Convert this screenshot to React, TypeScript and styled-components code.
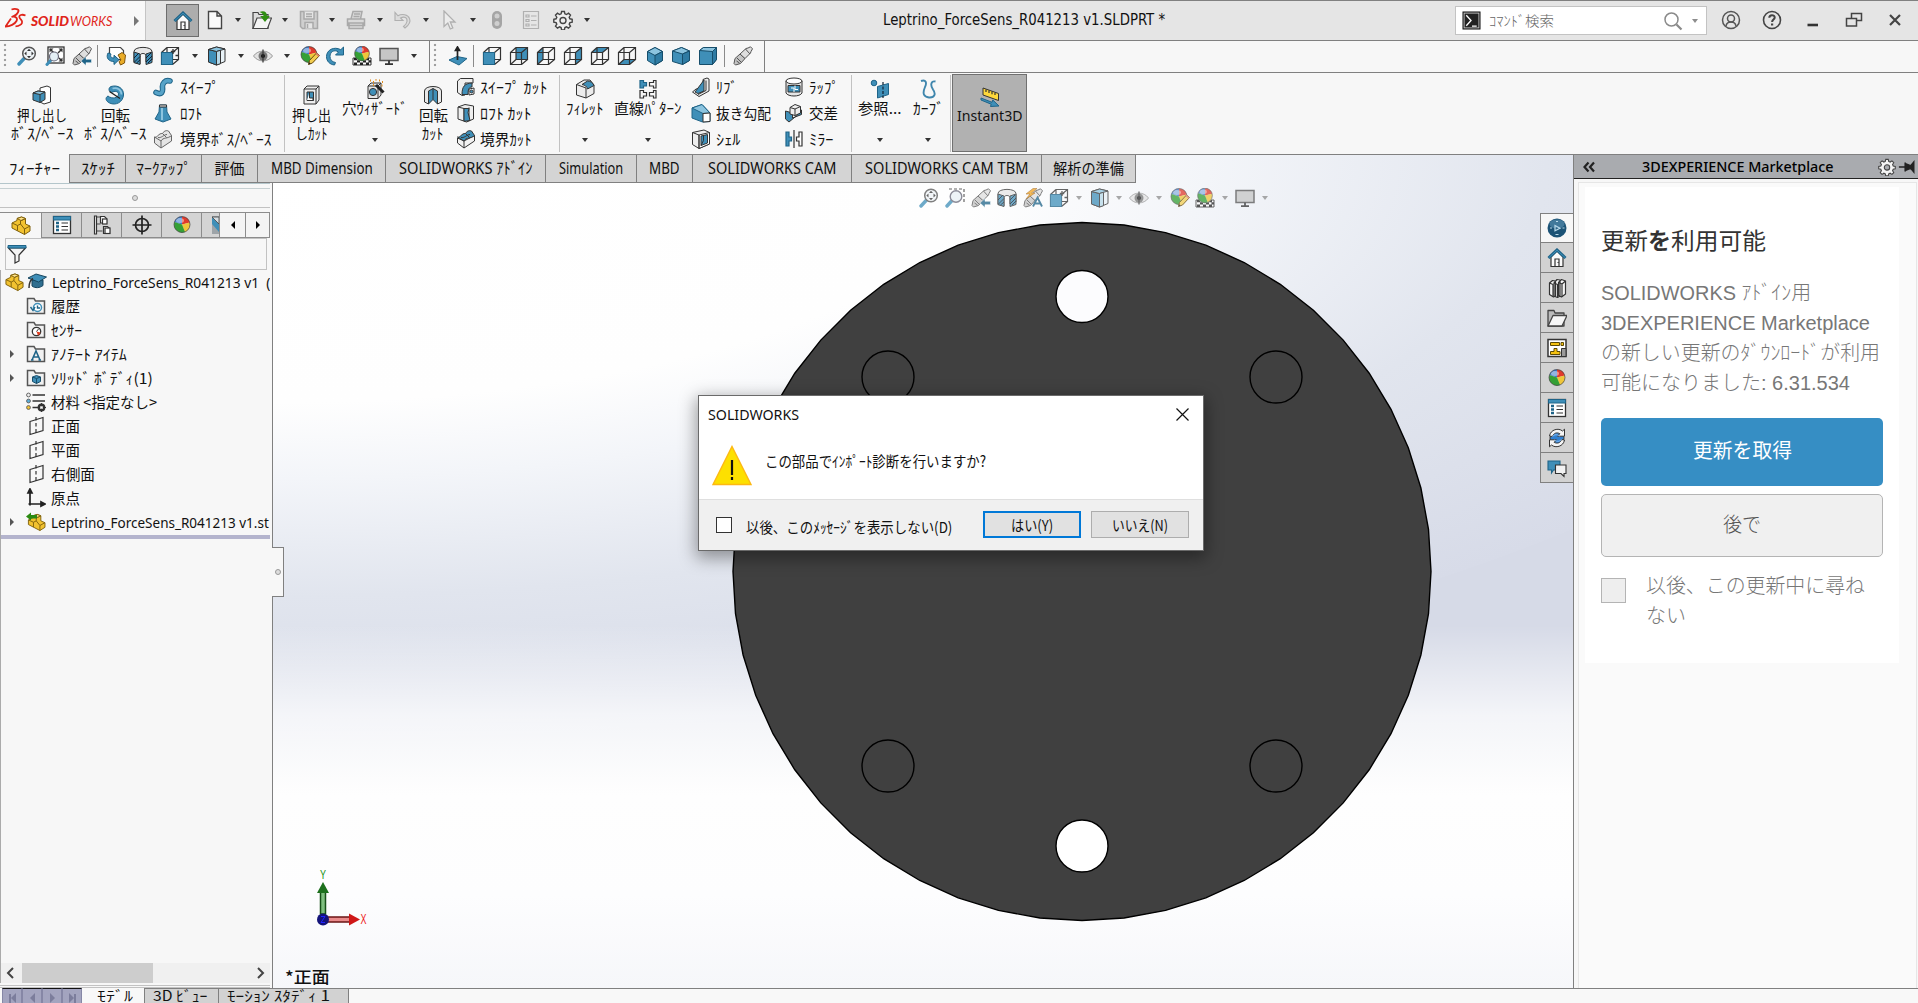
import React, { ReactNode, useLayoutEffect, useRef, useState } from "react";
import styled, { createGlobalStyle, css } from "styled-components";

const UI = `"Noto Sans", "Noto Sans CJK JP", sans-serif`;
const TAHOMA = `"DejaVu Sans Condensed", "DejaVu Sans", "Noto Sans CJK JP", sans-serif`;
const KANA = `"Noto Sans CJK JP", sans-serif`;
const ARIAL = `"Liberation Sans", "Noto Sans CJK JP Light", "Noto Sans CJK JP", sans-serif`;
const THIN = `"Noto Sans CJK JP Light", "Noto Sans CJK JP", sans-serif`;

const Global = createGlobalStyle`
  * { box-sizing: border-box; }
  html, body { margin: 0; padding: 0; overflow: hidden; }
  body { font-family: ${UI}; color: #111; background: #f7f7f7; }
  svg { display: block; flex: none; }
`;

/* ---------- Condensed label: squeezes its text into the width of its slot ---------- */

const LabelBox = styled.span<{ $w: number; $size: number; $color: string; $font: string; $lh: number; $weight: number; $dy: number }>`
  display: block;
  flex: none;
  width: ${(p) => p.$w}px;
  height: ${(p) => p.$lh}px;
  margin-top: ${(p) => p.$dy}px;
  line-height: ${(p) => p.$lh}px;
  font-family: ${(p) => p.$font};
  font-size: ${(p) => p.$size}px;
  font-weight: ${(p) => p.$weight};
  color: ${(p) => p.$color};
  white-space: pre;
`;
const LabelInk = styled.span`
  display: inline-block;
  transform-origin: 0 50%;
  vertical-align: top;
`;

type LabelProps = { w: number; size?: number; color?: string; font?: string; lh?: number; weight?: number; dy?: number; children: ReactNode };
function Label({ w, size = 15, color = "#111", font = KANA, lh = 18, weight = 400, dy = 0, children }: LabelProps) {
  const ref = useRef<HTMLSpanElement>(null);
  const [scale, setScale] = useState(1);
  useLayoutEffect(() => {
    if (ref.current) setScale(w / ref.current.offsetWidth);
  }, [w]);
  return (
    <LabelBox $w={w} $size={size} $color={color} $font={font} $lh={lh} $weight={weight} $dy={dy}>
      <LabelInk ref={ref} style={{ transform: `scaleX(${scale})` }}>{children}</LabelInk>
    </LabelBox>
  );
}

/* ---------- Icons ---------- */

const K = "#333";
const B = "#3f8fb8";
const BD = "#1f6488";
const BL = "#8cc4df";

const wire = (
  <path d="M1.5 6.5h11v12h-11zM7 1.5h11.500v12h-11.500zM1.500 6.500L7 1.500M12.500 6.500l6-5M12.500 18.500l6-5M1.500 18.500l5.500-5" fill="none" stroke={K} strokeWidth="1.200" />
);
const ball = (
  <g>
    <circle cx="10" cy="9.500" r="8" fill="#dcdcdc" />
    <path d="M10 9.500L2.500 7A8 8 0 0 1 10 1.500z" fill="#3b78c8" />
    <path d="M10 9.500V1.500a8 8 0 0 1 7.800 6z" fill="#e03a2c" />
    <path d="M10 9.500l7.800-2a8 8 0 0 1-5 9.500z" fill="#efc63a" />
    <path d="M10 9.500l3 7.500A8 8 0 0 1 2.500 7z" fill="#35a035" />
    <ellipse cx="8" cy="5.500" rx="4" ry="2.500" fill="#fff" opacity=".45" />
    <circle cx="10" cy="9.500" r="8" fill="none" stroke="#444" strokeWidth=".7" />
  </g>
);
const folder = <path d="M1.500 17.500V2.500h6.500l1.500 2.500H18.500v12.500z" fill="#f1f1f1" stroke="#555" strokeWidth="1.500" />;
const lens = (
  <g>
    <path d="M2 18l6-6.500" stroke={B} strokeWidth="3.400" strokeLinecap="round" />
    <circle cx="12" cy="7.500" r="6.300" fill="#eef3f6" stroke="#555" strokeWidth="1.500" />
  </g>
);
const spray = (
  <g stroke="#555" strokeWidth="1" strokeLinejoin="round">
    <path d="M2 12.500l5-4.500 5 4.500-4.500 5-5 1.500-1.500-1.500z" fill="#c4c4c4" />
    <path d="M7 8l6-5.500 2-.5L17.500.8l2 2-1.500 2.700-.5 1.500L12 12.500z" fill="#dedede" />
    <path d="M4 12l4 4M12.500 3l4.500 5M3.500 15l3 2" fill="none" />
  </g>
);
const partBlock = (
  <g stroke="#80610c" strokeWidth="1" strokeLinejoin="round">
    <path d="M1 7l5-2.500V2.500L10.500 1l4 1.500v5.500l4.500 2V15l-5.500 3.500L1 12z" fill="#f2c230" />
    <path d="M1 7l5.500 2.500L9.500 8V5l5-2.500M9.500 8l4 5 5.500-3M6.500 9.500v5.200M13.500 13v5.500" fill="none" />
    <path d="M6 2.500l4 2 4.500-2-4-1.500z" fill="#ffe38a" />
  </g>
);
const planeShape = <path d="M4 5.500l13-4v13l-13 4z" fill="none" stroke={K} strokeWidth="1.200" />;
const listDoc = (
  <g>
    <rect x="1.500" y="1.500" width="17" height="17" fill="#fff" stroke={K} strokeWidth="1.300" />
    <rect x="1.500" y="1.500" width="17" height="3.500" fill={B} stroke={BD} />
    <path d="M4 8h3M4 11.500h3M4 15h3" stroke={BD} strokeWidth="2.400" />
    <path d="M9.500 8H16M9.500 11.500H16M9.500 15H16" stroke={K} strokeWidth="1.200" />
  </g>
);
const gearPath = "M8.600 1.500h2.800l.5 2.300 1.600.7 2-1.300 2 2-1.300 2 .7 1.600 2.300.5v2.800l-2.300.5-.7 1.600 1.300 2-2 2-2-1.300-1.600.7-.5 2.300H8.600l-.5-2.300-1.600-.7-2 1.300-2-2 1.300-2-.7-1.600-2.300-.5V9.300l2.300-.5.7-1.600-1.300-2 2-2 2 1.300 1.600-.7z";

const icons: Record<string, ReactNode> = {
  home: (
    <g>
      <path d="M4 9v9.500h12V9l-6-6z" fill="#fafafa" stroke={K} strokeWidth="1.200" />
      <path d="M8 18.500V11h4v7.500M10.500 14.500h.8" fill="none" stroke={K} strokeWidth="1.200" />
      <path d="M1.500 10L10 2l8.500 8" fill="none" stroke={BD} strokeWidth="3" />
      <path d="M1.800 9.700L10 2.200l8.200 7.500" fill="none" stroke={B} strokeWidth="1" />
    </g>
  ),
  newDoc: <path d="M3.500 1.500h8.500l4.500 4.500v12.500H3.500zM12 1.500V6h4.500" fill="#fbfbfb" stroke="#444" strokeWidth="1.400" />,
  open: (
    <g>
      <path d="M1 18.500V2.500h5l1 2h9v14z" fill="#ddd" stroke="#444" strokeWidth="1.200" />
      <path d="M1 18.500L5 8h14.500l-4 10.500z" fill="#f4f4f4" stroke="#444" strokeWidth="1.200" />
      <path d="M7.500 2c4.500-2 7.500 0 7.500 4h2.800l-4.800 6L8.200 6H11.500c0-1.800-1.500-3-4-4z" fill="#2f8f12" />
    </g>
  ),
  save: (
    <g fill="none" stroke="#a9a9a9" strokeWidth="1.500">
      <path d="M1.500 1.500h17v17h-15l-2-2z" fill="#cfcfcf" />
      <path d="M5 1.500v7.500h10V1.500M7 4h6M7 6.500h6M6 18.500v-6h8v6M8.500 14v4" fill="#e5e5e5" />
    </g>
  ),
  print: (
    <g fill="#dadada" stroke="#a9a9a9" strokeWidth="1.500">
      <path d="M5 9L7 1.500h9L14.500 9M1.500 9h17v6.500h-17zM3 13h14v5.500H3z" />
      <path d="M8 4h6M7.500 6.500h6" />
    </g>
  ),
  undo: <path d="M2 2.500v8h8L7.500 8c4-2 7-.5 6.500 3.500-.3 2-1.500 3.500-3.500 5l1.500 1.500c4-3 6-6 4.500-9.500C15 4.500 9 3.500 5 5.800z" fill="#dcdcdc" stroke="#b0b0b0" strokeWidth="1.100" />,
  pointer: <path d="M5 1v15.500l3.800-3.500 2.500 6 2.500-1-2.500-6H16z" fill="#ececec" stroke="#b0b0b0" strokeWidth="1.300" />,
  traffic: (
    <g>
      <rect x="5" y="1" width="10" height="18" rx="5" fill="#a5a5a5" />
      <circle cx="10" cy="6" r="2.500" fill="#cfcfcf" />
      <circle cx="10" cy="13.500" r="2.500" fill="#cfcfcf" />
    </g>
  ),
  options: <path d="M2.500 1.500h15v17h-15zM5 5h3v2H5zM5 9.500h3v2H5zM5 14h3v2H5zM10 6h5.500M10 10.500h5.500M10 15h5.500" fill="none" stroke="#b0b0b0" strokeWidth="1.200" />,
  gear: (
    <g fill="none" stroke="#444" strokeWidth="1.400">
      <path d={gearPath} fill="#eee" />
      <circle cx="10" cy="10.500" r="3" />
    </g>
  ),
  gearLight: (
    <g fill="#f4f4f4" stroke="#444" strokeWidth="1.200">
      <path d={gearPath} />
      <circle cx="10" cy="10.500" r="3" fill="#a9abaf" />
    </g>
  ),
  zoomFit: (
    <g>
      {lens}
      <path d="M12 2.800l2 2.200h-4zM12 12.200l2-2.200h-4zM7.300 7.500l2.200-2v4zM16.700 7.500l-2.200-2v4z" fill={K} />
    </g>
  ),
  zoomArea: (
    <g>
      <path d="M4 1h15v15" fill="none" stroke={K} strokeWidth="1.200" strokeDasharray="3 2" />
      <path d="M2 18l5-5.500" stroke={B} strokeWidth="3.400" strokeLinecap="round" />
      <circle cx="11" cy="8.500" r="5.800" fill="#e8f0f5" stroke="#667" strokeWidth="1.400" />
    </g>
  ),
  zoomBox: (
    <g>
      <rect x="3" y="1" width="16" height="16" fill="#fff" stroke={K} strokeWidth="1.300" />
      <path d="M5 3l3.500 3.500M17 3l-4 4M17 15l-3-3" stroke={K} strokeWidth="1.500" />
      <path d="M4.500 2.500h4l-4 4zM17.500 2.500h-4l4 4zM17.500 15.500v-4l-4 4z" fill={K} />
      <path d="M2 18.500l4-4.500" stroke={B} strokeWidth="3" strokeLinecap="round" />
      <circle cx="9" cy="10.500" r="4.500" fill="#e4eff5" stroke="#667" strokeWidth="1.200" />
    </g>
  ),
  prevView: (
    <g>
      {spray}
      <path d="M9 15l5-4.500v2.800h5.500v3.400H14v2.800z" fill={BD} stroke="#fff" strokeWidth=".5" />
    </g>
  ),
  spray,
  dynamic: (
    <g>
      {spray}
      <path d="M10 .5L3 6h4l-4 5 9-6H8.500L14 .5z" fill="#f3a51e" stroke="#99590a" strokeWidth=".6" />
      <path d="M10 18.500L14.500 9.500l4.500 9M11.500 15.500h6" fill="none" stroke={BD} strokeWidth="1.900" />
    </g>
  ),
  rotateDoc: (
    <g>
      <path d="M3.500 1.500h11l3 3v9h-14z" fill="#fff" stroke="#444" strokeWidth="1.200" />
      <path d="M2 7c-2.500 5 1 8.500 6 8.500v3l5-4.800-5-4.500v2.800c-3 0-4-1.500-3-4z" fill={B} stroke={BD} />
      <path d="M12 9l4-2.500 3.500 2.500-1 8-4 2-1.500-3.500 2-1.500z" fill="#e9ac28" stroke="#80550c" />
    </g>
  ),
  section: (
    <g stroke={K} strokeWidth="1">
      <path d="M1 5.500c0-5.500 18-5.500 18 0V14l-6 2V9c-1-2-5-2-6 0v9l-6-1.500z" fill="#e6e6e6" />
      <path d="M1 6l6 2v10.500l-6-2zM13 8l6-2v10.500l-6 2z" fill={B} />
      <path d="M1 12l5-5M1.500 16L7 10.500M3.500 17L7 14M13 12l5-5M13 16l6-6M15 17l4-4" stroke="#123" />
    </g>
  ),
  viewCube: (
    <g>
      {wire}
      <path d="M1.500 6.500h11v12h-11z" fill={B} stroke={BD} />
      <path d="M13 3v5M10.800 5.500h4.400M15.500 9.500h3" stroke={K} strokeWidth="1.300" />
    </g>
  ),
  shaded: (
    <g stroke={K} strokeWidth="1" strokeLinejoin="round">
      <path d="M1.500 3.500l8-2.500 8.500 2v12.500L9.500 19l-8-3z" fill="#e8f2f7" />
      <path d="M1.500 3.500l8 2V19l-8-3z" fill={B} />
      <path d="M1.500 3.500l8 2 8.500-2.500-8.500-2z" fill={BL} />
      <path d="M9.500 5.500l4-1.200V17.700L9.500 19z" fill="#b7d9e9" />
    </g>
  ),
  eye: (
    <g>
      <path d="M.5 10C5 3.500 15 3.500 19.500 10 15 16.500 5 16.500.5 10z" fill="#e2e2e2" stroke="#999" strokeWidth="1" />
      <circle cx="10" cy="10" r="4.500" fill="#777" />
      <circle cx="10" cy="10" r="2" fill="#111" />
      <path d="M10 3.500v13" stroke={K} strokeWidth="1.200" />
    </g>
  ),
  ball,
  ballPencil: (
    <g>
      <g transform="translate(-1 -1)">{ball}</g>
      <path d="M8.500 18.500l1-4L16.500 7l3 2.500-7 7.500z" fill="#f2cd50" stroke="#6b4b0b" strokeWidth="1" />
      <path d="M8.500 18.500l.6-2.200 1.600 1.400z" fill="#222" />
      <path d="M15.500 8l3 2.700 1-1.200-3-2.600z" fill="#d97b6e" />
    </g>
  ),
  scene: (
    <g>
      <path d="M1 12h18v7H1z" fill="#fff" stroke={K} />
      <path d="M2 12h3v2.300H2zM8 12h3v2.300H8zM14 12h3v2.300h-3zM5 14.300h3v2.300H5zM11 14.300h3v2.300h-3zM16.500 14.300H19v2.300h-2.500zM2 16.600h3V19H2zM8 16.600h3V19H8zM14 16.600h3V19h-3z" fill="#222" />
      <g transform="translate(.8 -1.200) scale(.92)">{ball}</g>
    </g>
  ),
  monitor: (
    <g>
      <rect x="1" y="2.500" width="18" height="12" fill="#c6c6c6" stroke="#555" strokeWidth="1.500" />
      <path d="M10 14.500v4M6 18.200h8" stroke="#333" strokeWidth="1.800" />
    </g>
  ),
  refresh: <path d="M18.500 1v8h-8l3-3C9 3 5 6 5 10.500c0 3 2 5.500 5.500 6l-1 2.500C4.500 18.500 1.500 15 1.500 10.500 1.500 4 9 0 15.800 3.700z" fill={B} stroke={BD} strokeWidth="1" />,
  normalTo: (
    <g>
      <path d="M1 14l8-3.500 10 2-8 6.500z" fill={B} stroke={BD} />
      <path d="M9.500 14V2M9.500 1L7.500 4.500h4z" stroke="#222" strokeWidth="1.700" fill="#222" />
    </g>
  ),
  cFront: <g>{wire}<path d="M1.500 6.500h11v12h-11z" fill={B} stroke={BD} /></g>,
  cBack: <g><path d="M7 1.500h11.500v12H7z" fill={B} />{wire}</g>,
  cLeft: <g><path d="M1.500 6.500L7 1.500v12l-5.500 5z" fill={B} />{wire}</g>,
  cRight: <g><path d="M12.500 6.500l6-5v12l-6 5z" fill={B} />{wire}</g>,
  cTop: <g><path d="M1.500 6.500L7 1.500h11.500l-6 5z" fill={B} />{wire}</g>,
  cBottom: <g><path d="M1.500 18.500l5.500-5h11.500l-6 5z" fill={B} />{wire}</g>,
  iso: (
    <g stroke="#174e6b" strokeWidth="1" strokeLinejoin="round">
      <path d="M2.500 5.500L10 1.500l7.500 4v9L10 19l-7.500-4.500z" fill={B} />
      <path d="M2.500 5.500L10 9.500l7.500-4L10 1.500z" fill={BL} />
      <path d="M10 9.500V19l7.500-4.500v-9z" fill="#2f7ba3" />
    </g>
  ),
  dimetric: (
    <g stroke="#174e6b" strokeWidth="1" strokeLinejoin="round">
      <path d="M1.500 5l9-3.500L18.500 5v9.500l-7 4-10-3z" fill={B} />
      <path d="M1.500 5l10 3 7-3-8-3.500z" fill={BL} />
      <path d="M11.500 8v10.500l7-4V5z" fill="#2f7ba3" />
    </g>
  ),
  trimetric: (
    <g stroke="#174e6b" strokeWidth="1" strokeLinejoin="round">
      <path d="M1.500 4.500l4-3h13v12l-4 5h-13z" fill={B} />
      <path d="M1.500 4.500l4-3h13l-4 4z" fill={BL} />
      <path d="M14.500 5.500v13l4-5v-12z" fill="#2f7ba3" />
    </g>
  ),
  boss: (
    <g stroke={K} strokeWidth="1" strokeLinejoin="round">
      <path d="M8 3l7-2 3.500 1.500V17L12 19l-4-2z" fill="#fff" />
      <path d="M1 8l5-2 7 1v7.500L8 17.500 1 15z" fill={B} />
      <path d="M1 8l7 1.500 5-2.500-7-1z" fill={BL} />
      <path d="M8 9.500v8" />
    </g>
  ),
  revolve: (
    <g>
      <path d="M6 1.500c7-2 13 2 12.500 8.500C18 17 11 21 4.500 18 .5 16 0 12.500 3 11c4 3.500 10.500 2 10.500-2 0-2.500-3.500-3.500-7-1.500-3-1-3.500-4.500-.5-6z" fill={B} stroke={BD} />
      <path d="M7.500 3.500c5-1.500 9 1.500 9 6" stroke={BL} strokeWidth="1.800" fill="none" />
      <path d="M4.500 6.500l10.500 7" stroke="#222" strokeWidth="1.300" />
    </g>
  ),
  sweep: (
    <g fill="none" strokeLinecap="round">
      <path d="M3 15.500c6 3 7-1 6.500-5S12 2.500 17 4" stroke={BD} strokeWidth="5.600" />
      <path d="M3 15.500c6 3 7-1 6.500-5S12 2.500 17 4" stroke="#57a3c8" strokeWidth="3.600" />
    </g>
  ),
  loft: (
    <g stroke={BD} strokeWidth="1">
      <path d="M6.500 2h7l.5 7 4 7-8 3-8-3 4-7z" fill={B} />
      <path d="M6.500 2h7v2h-7z" fill="#eee" stroke={K} />
      <path d="M9 5v12" stroke={BL} strokeWidth="2" />
    </g>
  ),
  boundary: (
    <g stroke="#666" strokeWidth="1" strokeLinejoin="round">
      <path d="M1.500 8c3 1 4-4 8-3.500 2-3.500 5-3 6-2.500l3 4.500V12L8 19l-6.500-5z" fill="#e4e4e4" />
      <path d="M1.500 8l6.500 4c2-4 7-2 10.500-5.500M8 12v7M5 8.500c3 1 6-3 9-3M9.500 4.500l4 4" fill="none" />
    </g>
  ),
  boundaryCut: (
    <g stroke={K} strokeWidth="1" strokeLinejoin="round">
      <path d="M1.500 9L8 12l10.500-5.500V12L8 19l-6.500-5z" fill="#f2f2f2" />
      <path d="M1.500 8c3 1 4-4 8-3.500 2-3.500 5-3 6-2.500l3 4.500C15 10 10 8 8 12z" fill={B} />
      <path d="M5 8.500c3 1 6-3 9-3M9.500 4.500l4 4M8 12v7" fill="none" />
    </g>
  ),
  bossCut: (
    <g stroke={K} strokeWidth="1" strokeLinejoin="round">
      <path d="M3 4l3-3h12v14l-3 4H3z" fill="#eee" />
      <path d="M3 4h12v15M15 4l3-3" fill="none" />
      <rect x="6" y="7" width="6.500" height="8.500" fill={B} />
      <path d="M8.500 7v6H12v2.500H6" fill="#fff" />
    </g>
  ),
  wizard: (
    <g stroke={K} strokeWidth="1" strokeLinejoin="round">
      <path d="M3 7l3-3h10v12l-3 3.500H3z" fill="#e6e6e6" />
      <path d="M3 7h10v12.500M13 7l3-3" fill="none" />
      <circle cx="8" cy="13" r="3.600" fill={B} />
      <path d="M11 6l7.500 7.500" stroke="#222" strokeWidth="3" />
      <path d="M5 1.500h1M8 3h1M10.500 .8h1M14 1.500h1M17 3h1M8 6h1M16.500 6.500h1" stroke="#e08a1a" strokeWidth="2" />
    </g>
  ),
  revolveCut: (
    <g stroke={K} strokeWidth="1" strokeLinejoin="round">
      <path d="M1.500 6c0-6 17-6 17 0v11l-4 2V9h-9v10l-4-2z" fill="#e8e8e8" />
      <path d="M5.500 6L10 3.500 14.500 6v13L10 14.500 5.500 19z" fill={B} />
      <path d="M10 3.500v11" />
    </g>
  ),
  sweepCut: (
    <g stroke={K} strokeWidth="1" strokeLinejoin="round">
      <path d="M1.500 4l3-2.500H17V6H9v12l-3 .5-4.500-3z" fill="#eee" />
      <path d="M6 17.500C6 9 9 6.500 16 6v4c-3 0-4 2-4 7.500z" fill={B} />
      <path d="M13 12l5-1v6l-5 1z" fill="#fff" />
      <circle cx="15.500" cy="14.500" r="1.500" fill={B} />
    </g>
  ),
  loftCut: (
    <g stroke={K} strokeWidth="1" strokeLinejoin="round">
      <path d="M2 4l7-2.500 8.500 1.500v13l-7 3-8.500-3z" fill="#eee" />
      <path d="M2 4l6 1.500V18M13 4.500V18" fill="none" />
      <path d="M8 5.500h5l-1 4 2 8-6 .8z" fill={B} />
    </g>
  ),
  fillet: (
    <g stroke={K} strokeWidth="1" strokeLinejoin="round">
      <path d="M1.500 5.500L9 1h6l4 5v8.500L11 19l-9.500-3z" fill="#ececec" />
      <path d="M1.500 5.500L11 9v10" fill="none" />
      <path d="M7 5.500L12.500 2c3 0 5.500 2 6.500 4.500L12.500 10C12 7.500 10 6 7 5.500z" fill={B} />
    </g>
  ),
  pattern: (
    <g fill="none" stroke={K} strokeWidth="1.200">
      <path d="M2 1.500h3.500v2H8.500v3.500H5.500V9H2z" fill={B} stroke={BD} />
      <path d="M18 1.500h-2.500v2h-4v3.500h4V9H18zM2 11.500h3.500v2h3v3.500h-3V19H2zM18 11.500h-2.500v2h-4v3.500h4V19H18z" />
    </g>
  ),
  rib: (
    <g stroke={K} strokeWidth="1" strokeLinejoin="round">
      <path d="M12 2.500l4-1.500 2 1v12L8 19.500 1.500 15 5 12l7-1z" fill="#eee" />
      <path d="M13 3L4 15l3 1.500 6-2.500z" fill={B} />
      <path d="M15 3.500v10l-8 4" fill="none" />
    </g>
  ),
  draft: (
    <g stroke={BD} strokeWidth="1" strokeLinejoin="round">
      <path d="M1 5l10-3.500L19 10v8.500l-7.500.5L1 15z" fill={B} />
      <path d="M1 5l10-3.500 8 8.500-7 .5z" fill={BL} />
      <path d="M12 10.500l7-.5v8.500l-7 .5z" fill="#fff" stroke={K} />
    </g>
  ),
  shell: (
    <g stroke={K} strokeWidth="1" strokeLinejoin="round">
      <path d="M1.500 3.500L13 1l5.500 2.500V15L8 19.500l-6.500-4z" fill="#eee" />
      <path d="M8 6l10.500-2.500V15L8 19.500z" fill="#fff" />
      <path d="M10 7l6.500-1.500V14L10 16.500z" fill={B} />
      <path d="M10 16.500l2.500-5V6.500" fill="none" />
      <path d="M1.500 3.500L8 6v13.500" fill="none" />
    </g>
  ),
  wrap: (
    <g stroke={K} strokeWidth="1">
      <path d="M2 4v12c2 4 14 4 16 0V4z" fill="#e6e6e6" />
      <ellipse cx="10" cy="4" rx="8" ry="3" fill="#fff" />
      <path d="M4 8.500h12v6.500H4z" fill={B} />
      <path d="M7 11h3v4M11 8.500v4h3" stroke="#fff" fill="none" />
    </g>
  ),
  intersect: (
    <g stroke={K} strokeWidth="1" strokeLinejoin="round">
      <path d="M1.500 8l7 2v5l9-3.500V7l-4 1v4L5 19l-3.500-3z" fill={B} />
      <path d="M6 4.500l5-3 5.500 2V10L11 12.500 6 11z" fill="#eee" />
      <path d="M6 4.500l5 1.500 5.500-2.500M11 6v6.500" fill="none" />
    </g>
  ),
  mirror: (
    <g strokeWidth="1.200">
      <path d="M2 3h3v5h2.500v4H5v5H2z" fill={B} stroke={BD} />
      <path d="M18 3h-3v5h-2.500v4H15v5H18z" fill="#fff" stroke={K} />
      <path d="M10 1v18" stroke={K} />
    </g>
  ),
  reference: (
    <g>
      <circle cx="4" cy="4" r="2.800" fill={B} stroke={BD} />
      <path d="M7.500 7.500l11-3V15.500l-11 3.500z" fill={B} stroke={BD} />
      <path d="M13 3v16" stroke="#123" strokeWidth="1.200" strokeDasharray="3 1.500" />
    </g>
  ),
  curve: <path d="M3 2c5-2 6 2 4 6-3 7-1 10 4 10.500 6 .5 7-4 4-8C12 6 13 1.500 17.500 2.500" fill="none" stroke="#3f86ad" strokeWidth="1.900" />,
  instant: (
    <g>
      <path d="M3 1l15.500 5.500v7L3 8z" fill="#ffd83b" stroke={K} />
      <path d="M6 2.500V5M9 3.500V6M12 4.600v2.700M15 5.700V8" stroke={K} strokeWidth="1.200" />
      <path d="M1 11l11 4.300.8-2.300 6.200 6-8.500.5.700-2.300L1 13z" fill={B} stroke={BD} />
    </g>
  ),
  part: partBlock,
  importPart: (
    <g>
      <g transform="translate(1.500 1.500) scale(.92)">{partBlock}</g>
      <path d="M0 4.500L5 .5V3h6v3.500H5v2z" fill="#2b8a12" />
    </g>
  ),
  listDoc,
  config: (
    <g fill="#fff" stroke={K} strokeWidth="1.200">
      <path d="M3.500 2h6M3.500 9h5M3.500 16h7" stroke="#777" strokeWidth="1.600" />
      <path d="M2.500 1h2v18h-2z" />
      <path d="M8.500 1.500h4l2 2v4.500h-6zM11.500 11.500h4l2 2v5h-6z" />
      <rect x="10.500" y="4" width="4.500" height="5" />
      <rect x="13" y="13" width="5" height="5.500" />
    </g>
  ),
  target: (
    <g fill="none" stroke="#222" strokeWidth="1.700">
      <circle cx="10" cy="10" r="6.500" />
      <path d="M10 .5v19M.5 10h19" />
    </g>
  ),
  filter: (
    <g>
      <path d="M1.500 4l6.500 7v8l4-2v-6l6.500-7z" fill="#f4f4f4" stroke={K} strokeWidth="1.200" />
      <path d="M1 1.500h18V4H1z" fill={B} stroke={BD} />
    </g>
  ),
  cap: (
    <g stroke="#17455e" strokeWidth="1">
      <path d="M5 8v6c3 2.500 8 2 11-.5V8z" fill="#2f6e8f" />
      <path d="M1 6l8-4 10.500 3-8 5z" fill={B} />
      <path d="M6 6.500C3 8 2 11 2 16" stroke={K} strokeWidth="1.500" fill="none" />
    </g>
  ),
  fHistory: (
    <g>
      {folder}
      <circle cx="11.500" cy="11.500" r="4" fill="#fff" stroke={B} strokeWidth="1.500" />
      <path d="M11.500 9.500V12H14M4.500 11l2.500 3.500 2-3.500" stroke={BD} strokeWidth="1.400" fill="none" />
    </g>
  ),
  fSensor: (
    <g>
      {folder}
      <circle cx="10.500" cy="11.500" r="4.200" fill="#fff" stroke={K} strokeWidth="1.300" />
      <path d="M10.500 11.500l4 1a4 4 0 0 1-2.500 3z" fill="#e23b1c" />
      <path d="M10.500 11.500l2-2.500" stroke={K} />
    </g>
  ),
  fNote: (
    <g>
      {folder}
      <path d="M6 16l4-9 4 9M7.500 13h5.500M5 16h2.500M12.500 16H15" fill="none" stroke={BD} strokeWidth="1.600" />
    </g>
  ),
  fBody: (
    <g>
      {folder}
      <path d="M6.500 9L10.500 7.500l4 1.500v4.500l-4 2-4-2z" fill={B} stroke="#174e6b" />
      <path d="M6.500 9l4 1.500 4-1.500M10.500 10.500v5" stroke="#174e6b" fill="none" />
    </g>
  ),
  material: (
    <g>
      <path d="M6.500 3H19M6.500 9H19M6.500 15.500H12" stroke={K} strokeWidth="1.700" />
      <circle cx="2.500" cy="3" r="1.900" fill="#eee" stroke="#666" />
      <circle cx="2.500" cy="9" r="1.900" fill="#58b0dd" stroke="#666" />
      <circle cx="2.500" cy="15.500" r="1.900" fill="#f2c230" stroke="#666" />
      <circle cx="15.500" cy="15.500" r="2.700" fill="none" stroke="#333" strokeWidth="2.400" />
      <path d="M15.500 11v9M11 15.500h9" stroke="#333" strokeWidth="1.200" />
      <circle cx="15.500" cy="15.500" r="1.300" fill="#f7f7f7" />
    </g>
  ),
  plane: <g>{planeShape}<path d="M10 1v3.500M10 7v3.500M10 13v4" stroke={K} strokeWidth="1.200" /></g>,
  origin: <path d="M4 17.500V2M4 1L2 5h4zM2.500 16h16M19 16l-4-2v4z" fill="#222" stroke="#222" strokeWidth="1.700" />,
  compass: (
    <g>
      <circle cx="10" cy="10" r="9.500" fill="#1c5376" />
      <ellipse cx="10" cy="6" rx="7.500" ry="4.500" fill="#5c93b4" opacity=".6" />
      <path d="M8 7.500l5 2.700-5 2.600zM3 10h2M15.500 10h2M9 3.500h2M8.500 16.500h3" stroke="#b9d9ea" strokeWidth="1.200" fill="none" />
    </g>
  ),
  library: (
    <g fill="#f6f6f6" stroke={K} strokeWidth="1.200" strokeLinejoin="round">
      <path d="M2.500 5l3-2.500 3 .5v15l-2 1-4-2.500zM7 5l3-3.500 3 .5v16l-2.500 1.500L7 18zM11.500 4.500l3-3 4 1.500v13l-4 3-3-1.500z" />
      <path d="M2.500 5l3.500 1.500v12M7 5l3.500 1.500v13M11.500 4.500L15 6v13M15 6l3.500-3" fill="none" />
    </g>
  ),
  folderOpen: (
    <g stroke="#444" strokeWidth="1.300" strokeLinejoin="round">
      <path d="M1 18V2.500h6l1 2.500h9V18z" fill="#bbb" />
      <path d="M1 18L6 7.500h14l-5 10.500z" fill="#f6f6f6" />
    </g>
  ),
  palette: (
    <g>
      <rect x="1" y="1.500" width="18" height="17" fill="#fff" stroke={K} strokeWidth="1.500" />
      <path d="M3.500 4.500h9v3h-9zM14 4.500h2.500v3H14zM7 10.500h3v3h3v3H3.500v-3H7z" fill="#f5c211" stroke="#5d4a05" />
      <path d="M14.500 10.500h4.500v8h-4.500z" fill="#999" stroke={K} />
    </g>
  ),
  sync: (
    <g stroke="#333" strokeWidth="1">
      <circle cx="10" cy="10" r="7" fill="#2f7fd0" />
      <path d="M2.500 8c1-6.500 9-8.500 13-5l2-1.800v7h-7l2.300-2.500C10 4 6.500 5 5.500 8.500z" fill="#f5f5f5" />
      <path d="M17.500 12c-1 6.500-9 8.500-13 5l-2 1.800v-7h7l-2.300 2.500c2.800 1.700 6.300.7 7.300-2.800z" fill="#f5f5f5" />
      <path d="M5.500 8.500c2-2 4-2.500 7-.5M14.500 11.500c-2 2-4 2.500-7 .5" stroke="#8cc4ff" fill="none" />
    </g>
  ),
  chat: (
    <g stroke={K} strokeWidth="1.100">
      <path d="M1 3h12v9H6.500L4.500 15v-3H1z" fill={B} stroke={BD} />
      <path d="M8.500 7H19v8.500h-2V18.500l-3-3H8.500z" fill="#f2f2f2" />
    </g>
  ),
  search: (
    <g fill="none" stroke="#8a8a8a" strokeWidth="1.500">
      <circle cx="8.500" cy="8.500" r="6.500" />
      <path d="M13.500 13.500l5 5" strokeWidth="2.200" />
    </g>
  ),
  prompt: (
    <g>
      <rect x="1" y="1" width="18" height="18" fill="#222" stroke="#222" />
      <rect x="2.200" y="2.200" width="15.600" height="15.600" fill="none" stroke="#ddd" strokeWidth=".8" />
      <path d="M4.500 4.500l5 5.500-5 5.500M10.500 16h5" fill="none" stroke="#fff" strokeWidth="1.400" />
    </g>
  ),
  user: (
    <g fill="none" stroke="#555" strokeWidth="1.500">
      <circle cx="10" cy="10" r="8.500" />
      <circle cx="10" cy="8.500" r="3.500" />
      <path d="M5 16c.5-3 2-4 5-4s4.500 1 5 4" />
    </g>
  ),
  help: (
    <g fill="none" stroke="#444" strokeWidth="1.600">
      <circle cx="10" cy="10" r="8.500" />
      <path d="M7.300 7.800c0-3.600 5.400-3.400 5.400-.3 0 2-2.600 2.200-2.600 4.500" strokeWidth="2" />
      <path d="M10.100 13.500v2" strokeWidth="2.200" />
    </g>
  ),
  minimize: <path d="M4.500 15h10.500" stroke="#333" strokeWidth="2.600" />,
  restore: <path d="M7.500 8.500V3.500h10v7h-5M2.500 8.500h10v7.500h-10z" fill="none" stroke="#444" strokeWidth="1.500" />,
  close: <path d="M5 5l10 10M15 5L5 15" stroke="#444" strokeWidth="2.200" />,
  pin: <path d="M1 10h7M8 5v10M9 6.500l5 2v3l-5 2zM17.500 4.500v11L13 10z" stroke="#222" strokeWidth="1.700" fill="#222" />,
  collapse: <path d="M8.500 5.500L4.500 10l4 4.500M14 5.500L10 10l4 4.500" fill="none" stroke="#222" strokeWidth="2.200" />,
};

function Icon({ name, size = 20 }: { name: string; size?: number }) {
  return <svg width={size} height={size} viewBox="0 0 20 20">{icons[name]}</svg>;
}

const Caret = styled.i<{ $muted?: boolean }>`
  display: block;
  flex: none;
  width: 0;
  height: 0;
  border: 3px solid transparent;
  border-top: 4px solid ${(p) => (p.$muted ? "#8d8d8d" : "#333")};
  border-bottom: 0;
`;
const Arrow = styled.i<{ $left?: boolean; $size?: number; $color?: string }>`
  display: block;
  flex: none;
  width: 0;
  height: 0;
  border: ${(p) => p.$size ?? 4}px solid transparent;
  ${(p) =>
    p.$left
      ? css`border-right-color: ${p.$color ?? "#000"}; border-left: 0;`
      : css`border-left-color: ${p.$color ?? "#000"}; border-right: 0;`}
`;

/* ---------- Tool strips ---------- */

const Strip = styled.div`
  display: flex;
  flex: none;
  align-items: center;
  height: 100%;
  padding-bottom: 1px;
`;
const ToolCell = styled.span<{ $gap: number; $w: number }>`
  display: flex;
  flex: none;
  justify-content: center;
  align-items: center;
  width: ${(p) => p.$w}px;
  margin-left: ${(p) => p.$gap}px;
`;
const VRule = styled.i<{ $h?: number; $c?: string }>`
  display: block;
  flex: none;
  width: 1px;
  height: ${(p) => p.$h ?? 22}px;
  background: ${(p) => p.$c ?? "#8a8a8a"};
`;
const Grip = styled.i`
  display: block;
  width: 4px;
  height: 26px;
  background-image: radial-gradient(circle at 2px 2px, #a0a0a0 1.2px, transparent 1.6px);
  background-size: 4px 5px;
`;

/* Tools are listed with the centre of each one along the strip; "v" is a drop-down caret, "|" a rule, ":" a grip. */
type Tool = [string, number];
function Tools({ start, items, muted }: { start: number; items: Tool[]; muted?: boolean }) {
  let end = start;
  return (
    <Strip>
      {items.map(([name, center], i) => {
        const w = name === "v" ? 6 : name === "|" ? 1 : name === ":" ? 4 : 20;
        const gap = center - w / 2 - end;
        end = center + w / 2;
        return (
          <ToolCell key={i} $gap={gap} $w={w}>
            {name === "v" ? <Caret $muted={muted} /> : name === "|" ? <VRule /> : name === ":" ? <Grip /> : <Icon name={name} />}
          </ToolCell>
        );
      })}
    </Strip>
  );
}

/* ---------- Frame ---------- */

const Window = styled.div`
  display: flex;
  flex-direction: column;
  width: 1918px;
  height: 1003px;
  overflow: hidden;
  background: #f7f7f7;
`;
const TitleBar = styled.header`
  display: flex;
  flex: none;
  height: 41px;
  background: #e5e5e5;
  border-top: 1px solid #808080;
  border-bottom: 1px solid #808080;
`;
const Brand = styled.div`
  display: flex;
  flex: none;
  align-items: center;
  width: 146px;
  padding-left: 5px;
  background: #f8f8f8;
  border-right: 1px solid #c4c4c4;
  gap: 5px;
`;
const BrandMark = styled.span`
  padding-bottom: 5px;
`;
const BrandText = styled.div`
  display: flex;
  width: 98px;
  gap: 1px;
  font-style: italic;
`;
const HomeButton = styled.div`
  display: flex;
  flex: none;
  align-items: center;
  justify-content: center;
  align-self: flex-start;
  width: 33px;
  height: 33px;
  margin: 3px 0 0 20px;
  background: #adadad;
  border: 1px solid #6d6d6d;
`;
const DocTitle = styled.div`
  display: flex;
  flex: none;
  align-items: center;
  margin-left: 293px;
  width: 572px;
`;
const SearchBox = styled.div`
  display: flex;
  flex: none;
  align-items: center;
  align-self: flex-start;
  width: 252px;
  height: 29px;
  margin-top: 5px;
  padding: 0 5px 0 6px;
  background: #fff;
  border: 1px solid #c3c3c3;
`;
const SearchText = styled.span`
  flex: 1;
  padding-left: 8px;
`;
const SearchCaret = styled.span`
  margin: 0 3px 0 9px;
`;

const ViewBar = styled.div`
  flex: none;
  display: flex;
  height: 32px;
  border-bottom: 1px solid #808080;
`;
const ViewDock = styled.div<{ $w: number }>`
  flex: none;
  width: ${(p) => p.$w}px;
  border-right: 1px solid #808080;
`;

/* ---------- Ribbon ---------- */

const Ribbon = styled.div`
  display: flex;
  flex: none;
  height: 81px;
  padding-left: 8px;
`;
const Cell = styled.div<{ $w: number; $gap?: number; $top: number }>`
  display: flex;
  flex: none;
  flex-direction: column;
  align-items: center;
  width: ${(p) => p.$w}px;
  margin-left: ${(p) => p.$gap ?? 0}px;
  padding-top: ${(p) => p.$top}px;
`;
const CellCaret = styled.span`
  margin-top: 21px;
`;
const ListCol = styled.div<{ $w: number; $gap?: number }>`
  flex: none;
  width: ${(p) => p.$w}px;
  margin-left: ${(p) => p.$gap ?? 0}px;
  padding-top: 1px;
`;
const ListRow = styled.div<{ $space: number }>`
  display: flex;
  align-items: center;
  height: 26px;
  gap: ${(p) => p.$space}px;
`;
const GroupRule = styled.i`
  flex: none;
  width: 1px;
  height: 77px;
  margin-top: 2px;
  background: #c2c2c2;
`;
const Instant = styled.div`
  display: flex;
  flex: none;
  flex-direction: column;
  align-items: center;
  width: 75px;
  height: 78px;
  margin: 1px 0 0 1px;
  padding-top: 12px;
  background: #b1b1b1;
  border: 1px solid #707070;
`;

type Line = [string, number];
function Command({ w, gap, icon, lines }: { w: number; gap?: number; icon: string; lines: Line[] }) {
  const tall = lines.length === 2;
  return (
    <Cell $w={w} $gap={gap} $top={tall ? 12 : 6}>
      <Icon name={icon} />
      {lines.map(([text, tw], i) => (
        <Label key={i} w={tw} dy={i === 0 ? (tall ? 1 : 0) : 0}>{text}</Label>
      ))}
      {!tall && <CellCaret><Caret /></CellCaret>}
    </Cell>
  );
}
function CommandList({ w, gap, space, rows }: { w: number; gap?: number; space: number; rows: [string, string, number][] }) {
  return (
    <ListCol $w={w} $gap={gap}>
      {rows.map(([icon, text, tw]) => (
        <ListRow key={text} $space={space}>
          <Icon name={icon} />
          <Label w={tw}>{text}</Label>
        </ListRow>
      ))}
    </ListCol>
  );
}

/* ---------- Body ---------- */

const Main = styled.div`
  display: flex;
  flex: 1;
  min-height: 0;
  border-top: 1px solid #808080;
`;
const Work = styled.div`
  display: flex;
  flex: none;
  flex-direction: column;
  width: 1573px;
  background:
    linear-gradient(to bottom, rgba(255, 255, 255, 0) 0, rgba(255, 255, 255, 0) 470px, rgba(255, 255, 255, 0.72) 560px, #fefefe 640px, #fdfdfe 740px, #f6f7fa 833px),
    radial-gradient(1300px 450px at 273px 0, #fff 0, #fefefe 55%, #f3f5f9 72%, #e1e5ee 98%, #d7dbe8 130%, #d6dae7 100%);
`;
const TabRow = styled.nav`
  display: flex;
  flex: none;
  height: 30px;
  margin-top: -1px;
`;
const Tab = styled.div<{ $w: number; $on?: boolean }>`
  display: flex;
  flex: none;
  align-items: center;
  justify-content: center;
  width: ${(p) => p.$w}px;
  height: 29px;
  padding-bottom: 1px;
  background: ${(p) => (p.$on ? "#f7f7f7" : "#d4d4d4")};
  border: solid #808080;
  border-width: ${(p) => (p.$on ? "0 1px 0 0" : "1px 1px 1px 0")};
`;
const Columns = styled.div`
  display: flex;
  flex: 1;
  min-height: 0;
`;
const Side = styled.aside`
  display: flex;
  flex: none;
  flex-direction: column;
  width: 273px;
  margin-top: -1px;
  background: #f7f7f7;
  border-right: 1px solid #808080;
  padding-right: 2px;
  overflow: hidden;
`;
const SideTop = styled.div`
  display: flex;
  flex: none;
  align-items: center;
  justify-content: center;
  height: 25px;
  padding-top: 4px;
  border-top: 1px solid #b4c6cb;
  border-bottom: 1px solid #c2c2c2;
  box-shadow: inset 0 4px 0 #f7f7f7, inset 0 5px 0 #c6d0d2;
`;
const Knob = styled.i`
  display: block;
  flex: none;
  width: 6px;
  height: 6px;
  border: 1px solid #999;
  border-radius: 50%;
  background: #ddd;
`;
const SideTabs = styled.div`
  display: flex;
  flex: none;
  height: 26px;
  margin-top: 4px;
  border-top: 1px solid #8c8c8c;
`;
const SideTab = styled.div<{ $w: number; $on?: boolean; $light?: boolean }>`
  display: flex;
  flex: none;
  align-items: center;
  justify-content: center;
  width: ${(p) => p.$w}px;
  overflow: hidden;
  background: ${(p) => (p.$on ? "#f7f7f7" : p.$light ? "#f4f4f4" : "#d4d4d4")};
  border-right: 1px solid #8c8c8c;
  border-bottom: ${(p) => (p.$on ? "0" : "1px solid #8c8c8c")};
`;
const SideTabCut = styled(SideTab)`
  justify-content: flex-end;
`;
const FilterBox = styled.div`
  display: flex;
  flex: none;
  align-items: center;
  width: 262px;
  height: 32px;
  margin: 0 0 0 5px;
  padding-left: 1px;
  border: 1px solid #c2c2c2;
`;
const Tree = styled.div`
  flex: 1;
  border-left: 1px solid #ababab;
  overflow: hidden;
`;
const TreeRow = styled.div`
  display: flex;
  align-items: center;
  height: 24px;
`;
const Twist = styled.span`
  display: flex;
  flex: none;
  justify-content: center;
  width: 25px;
  padding-right: 4px;
`;
const TreeText = styled.span`
  display: flex;
  padding-left: 5px;
`;
const TreeEnd = styled.div`
  height: 4px;
  margin-top: 1px;
  background: #b4b4cd;
`;
const HScroll = styled.div`
  display: flex;
  flex: none;
  align-items: center;
  height: 20px;
  margin-bottom: 2px;
  background: #f0f0f0;
  border-left: 1px solid #ababab;
`;
const HThumb = styled.i`
  flex: none;
  width: 131px;
  height: 20px;
  margin: 0 103px 0 2px;
  background: #cdcdcd;
`;
const SideFoot = styled.div`
  flex: none;
  height: 3px;
  border: solid #c2c2c2;
  border-width: 1px 0;
`;

const View = styled.main`
  position: relative;
  flex: 1;
`;
const Model = styled.svg`
  position: absolute;
  inset: 0;
`;
const HeadsUp = styled.div`
  position: absolute;
  left: 0;
  top: 0;
  width: 1020px;
  height: 29px;
  opacity: 0.75;
`;
const Flyout = styled.div`
  position: absolute;
  left: -1px;
  top: 363px;
  display: flex;
  align-items: center;
  justify-content: center;
  width: 12px;
  height: 50px;
  background: #f7f7f7;
  border: 1px solid #808080;
  border-left: 0;
`;
const ViewName = styled.div`
  position: absolute;
  left: 12px;
  bottom: 3px;
`;
const TaskTabs = styled.div`
  position: absolute;
  right: 0;
  top: 29px;
  display: flex;
  flex-direction: column;
  width: 33px;
  border-top: 1px solid #808080;
`;
const TaskTab = styled.div<{ $on?: boolean }>`
  display: flex;
  align-items: center;
  justify-content: center;
  height: ${(p) => (p.$on ? 29 : 30)}px;
  border: solid #808080;
  border-width: 0 0 1px 1px;
  background: ${(p) => (p.$on ? "#f7f7f7" : "#d2d2d2")};
`;

/* ---------- Dialog ---------- */

const Dialog = styled.section`
  position: absolute;
  left: 425px;
  top: 211px;
  width: 506px;
  height: 156px;
  display: flex;
  flex-direction: column;
  background: #fff;
  border: 1px solid #6a6a6a;
  box-shadow: 0 5px 16px 2px rgba(0, 0, 0, 0.38);
`;
const DialogHead = styled.div`
  display: flex;
  align-items: center;
  justify-content: space-between;
  height: 36px;
  padding: 0 14px 0 9px;
`;
const DialogBody = styled.div`
  display: flex;
  flex: 1;
  padding: 13px 0 0 13px;
  gap: 13px;
`;
const DialogFoot = styled.div`
  display: flex;
  flex: none;
  height: 51px;
  padding-left: 17px;
  background: #f0f0f0;
  border-top: 1px solid #dfdfdf;
`;
const Check = styled.i<{ $size: number; $border: string; $fill: string; $top: number; $gap: number }>`
  flex: none;
  width: ${(p) => p.$size}px;
  height: ${(p) => p.$size}px;
  margin: ${(p) => p.$top}px ${(p) => p.$gap}px 0 0;
  background: ${(p) => p.$fill};
  border: 1px solid ${(p) => p.$border};
`;
const DialogButton = styled.button<{ $primary?: boolean; $gap: number }>`
  display: flex;
  align-items: center;
  justify-content: center;
  flex: none;
  width: 98px;
  height: 27px;
  margin: 11px 0 0 ${(p) => p.$gap}px;
  padding: 0;
  background: #e1e1e1;
  border: ${(p) => (p.$primary ? "2px solid #0078d7" : "1px solid #adadad")};
`;

/* ---------- Task pane ---------- */

const Pane = styled.aside`
  display: flex;
  flex: none;
  flex-direction: column;
  width: 345px;
  background: #f7f7f7;
  border-left: 1px solid #808080;
`;
const PaneHead = styled.div`
  display: flex;
  flex: none;
  align-items: center;
  height: 24px;
  padding: 0 2px 0 6px;
  background: #a9abaf;
  border-bottom: 1px solid #222;
`;
const PaneTitle = styled.span`
  flex: 1;
  padding: 0 0 1px 42px;
`;
const PaneTools = styled.span`
  display: flex;
  align-items: center;
  gap: 2px;
`;
const PaneBody = styled.div`
  flex: 1;
  margin: 3px 1px 0 4px;
  padding: 4px 17px 0 6px;
  background: #fafafa;
  border: solid #e6e6e6;
  border-width: 1px 1px 0 1px;
`;
const Card = styled.div`
  height: 476px;
  padding: 36px 16px 0 16px;
  background: #fff;
`;
const Heading = styled.h2`
  display: flex;
  margin: 0 0 23px;
`;
const Action = styled.button<{ $primary?: boolean }>`
  display: flex;
  align-items: center;
  justify-content: center;
  width: 282px;
  height: ${(p) => (p.$primary ? 68 : 63)}px;
  margin: ${(p) => (p.$primary ? 20 : 8)}px 0 0;
  padding: 0 0 4px;
  border-radius: 5px;
  background: ${(p) => (p.$primary ? "#368ec4" : "#f0f0f0")};
  border: ${(p) => (p.$primary ? "0" : "1px solid #b4b4b4")};
`;
const AskRow = styled.div`
  display: flex;
  margin-top: 13px;
`;

/* ---------- Bottom tabs ---------- */

const Bottom = styled.footer`
  display: flex;
  flex: none;
  height: 15px;
  overflow: hidden;
  padding-left: 2px;
  background: #f8f8f8;
`;
const NavButton = styled.div<{ $w: number }>`
  display: flex;
  align-items: center;
  justify-content: center;
  flex: none;
  width: ${(p) => p.$w}px;
  height: 20px;
  background: #a3a4bf;
  border: 1px solid #8687a6;
  border-top: 1px solid #111;
`;
const NavBar = styled.i`
  width: 2px;
  height: 9px;
  background: #7c7d9c;
`;
const BottomTab = styled.div<{ $w: number; $pad: number; $on?: boolean }>`
  display: flex;
  flex: none;
  width: ${(p) => p.$w}px;
  height: 20px;
  padding-left: ${(p) => p.$pad}px;
  background: ${(p) => (p.$on ? "#f8f8f8" : "#d2d2d2")};
  border: solid #808080;
  border-width: ${(p) => (p.$on ? "0 1px 0 0" : "1px 1px 0 0")};
`;
const BottomRest = styled.div`
  flex: 1;
  border-top: 1px solid #808080;
`;

/* ---------- Data ---------- */

const fileTools: Tool[] = [
  ["newDoc", 215], ["v", 238], ["open", 262], ["v", 285], ["save", 309], ["v", 332], ["print", 356], ["v", 380],
  ["undo", 403], ["v", 426], ["pointer", 449], ["v", 473], ["traffic", 496.5], ["options", 530.5], ["gear", 563], ["v", 587],
];
const viewTools: Tool[] = [
  [":", 5], ["zoomFit", 27], ["zoomBox", 54.500], ["prevView", 81.500], ["|", 97.5], ["rotateDoc", 116], ["section", 143], ["viewCube", 170],
  ["v", 195], ["shaded", 217], ["v", 241], ["eye", 262.5], ["v", 287], ["ballPencil", 309.5], ["refresh", 334.5], ["scene", 361.5],
  ["monitor", 389], ["v", 414],
];
const orientTools: Tool[] = [
  [":", 435], ["normalTo", 457.5], ["|", 473.5], ["cFront", 492], ["cBack", 519], ["cLeft", 546], ["cRight", 573], ["cTop", 600],
  ["cBottom", 627], ["iso", 654.5], ["dimetric", 681], ["trimetric", 708], ["|", 724.5], ["spray", 743],
];
const headsUpTools: Tool[] = [
  ["zoomFit", 929], ["zoomArea", 955], ["prevView", 981], ["section", 1007], ["dynamic", 1033], ["viewCube", 1059], ["v", 1078.5],
  ["shaded", 1099.5], ["v", 1118.5], ["eye", 1139], ["v", 1158.5], ["ballPencil", 1180], ["scene", 1205], ["v", 1224.5],
  ["monitor", 1245], ["v", 1264.5],
];
const ribbonTabs: [string, number, number][] = [
  ["ﾌｨｰﾁｬｰ", 70, 51], ["ｽｹｯﾁ", 56, 34], ["ﾏｰｸｱｯﾌﾟ", 76, 56], ["評価", 56, 30], ["MBD Dimension", 128, 102],
  ["SOLIDWORKS ｱﾄﾞｲﾝ", 160, 134], ["Simulation", 91, 64], ["MBD", 56, 31], ["SOLIDWORKS CAM", 159, 128],
  ["SOLIDWORKS CAM TBM", 190, 163], ["解析の準備", 94, 71],
];
const tree: [string, string, number, boolean][] = [
  ["fHistory", "履歴", 29, false], ["fSensor", "ｾﾝｻｰ", 31, false], ["fNote", "ｱﾉﾃｰﾄ ｱｲﾃﾑ", 76, true], ["fBody", "ｿﾘｯﾄﾞ ﾎﾞﾃﾞｨ(1)", 102, true],
  ["material", "材料 <指定なし>", 106, false], ["plane", "正面", 29, false], ["plane", "平面", 29, false], ["plane", "右側面", 44, false],
  ["origin", "原点", 29, false], ["importPart", "Leptrino_ForceSens_R041213 v1.st", 218, true],
];
const taskIcons = ["compass", "home", "library", "folderOpen", "palette", "ball", "listDoc", "sync", "chat"];

/* Tessellated outline of the plate. */
const plate = Array.from({ length: 52 }, (_, i) => {
  const a = (i / 52) * Math.PI * 2;
  return `${(809 + 349 * Math.sin(a)).toFixed(1)},${(387.5 - 349 * Math.cos(a)).toFixed(1)}`;
}).join(" ");
const pockets: [number, number][] = [[615, 193], [1003, 193], [615, 582], [1003, 582]];

export default function App() {
  return (
    <Window>
      <Global />
      <TitleBar>
        <Brand>
          <BrandMark>
            <svg width="21" height="20" viewBox="0 0 21 20" fill="none" stroke="#e0251b" strokeWidth="1.800">
              <path d="M6.500 1.500C9.500.5 14 .8 13.500 3 13 5.500 9.500 8 6.500 9c4-1 6.500 1 5 4-1.500 3-6.500 5.500-11 5.500L6 10.500" />
              <path d="M20.500 7.500c-3.500-1.500-7-.5-6 2s3.500 3 2.500 5.500-3.500 3-6.500 3.300" />
            </svg>
          </BrandMark>
          <BrandText>
            <Label w={38} size={13} weight={900} color="#e0251b" font={`Lato, ${UI}`}>SOLID</Label>
            <Label w={42} size={13} color="#e0251b" font={`Lato, ${UI}`}>WORKS</Label>
          </BrandText>
          <Arrow $size={5} $color="#777" />
        </Brand>
        <HomeButton><Icon name="home" /></HomeButton>
        <Tools start={199} items={fileTools} />
        <DocTitle><Label w={282} size={15} font={TAHOMA} dy={-1}>Leptrino_ForceSens_R041213 v1.SLDPRT *</Label></DocTitle>
        <SearchBox>
          <Icon name="prompt" size={19} />
          <SearchText><Label w={65} color="#666" size={14} weight={300} dy={-1}>ｺﾏﾝﾄﾞ検索</Label></SearchText>
          <Icon name="search" />
          <SearchCaret><Caret $muted /></SearchCaret>
        </SearchBox>
        <Tools start={1707} items={[["user", 1731], ["help", 1772], ["minimize", 1813], ["restore", 1854], ["close", 1895]]} />
      </TitleBar>

      <ViewBar>
        <ViewDock $w={430}><Tools start={0} items={viewTools} /></ViewDock>
        <ViewDock $w={335}><Tools start={430} items={orientTools} /></ViewDock>
      </ViewBar>

      <Ribbon>
        <Command w={68} icon="boss" lines={[["押し出し", 50], ["ﾎﾞｽ/ﾍﾞｰｽ", 62]]} />
        <Command w={68} gap={5} icon="revolve" lines={[["回転", 29], ["ﾎﾞｽ/ﾍﾞｰｽ", 62]]} />
        <CommandList w={131} gap={4} space={7} rows={[["sweep", "ｽｲｰﾌﾟ", 40], ["loft", "ﾛﾌﾄ", 23], ["boundary", "境界ﾎﾞｽ/ﾍﾞｰｽ", 91]]} />
        <GroupRule />
        <Command w={46} gap={3} icon="bossCut" lines={[["押し出", 39], ["しｶｯﾄ", 33]]} />
        <Command w={70} gap={6} icon="wizard" lines={[["穴ｳｨｻﾞｰﾄﾞ", 66]]} />
        <Command w={40} gap={3} icon="revolveCut" lines={[["回転", 29], ["ｶｯﾄ", 22]]} />
        <CommandList w={103} gap={3} space={4} rows={[["sweepCut", "ｽｲｰﾌﾟ ｶｯﾄ", 67], ["loftCut", "ﾛﾌﾄ ｶｯﾄ", 51], ["boundaryCut", "境界ｶｯﾄ", 52]]} />
        <GroupRule />
        <Command w={44} gap={3} icon="fillet" lines={[["ﾌｨﾚｯﾄ", 38]]} />
        <Command w={72} gap={5} icon="pattern" lines={[["直線ﾊﾟﾀｰﾝ", 68]]} />
        <CommandList w={93} gap={7} space={5} rows={[["rib", "ﾘﾌﾞ", 22], ["draft", "抜き勾配", 55], ["shell", "ｼｪﾙ", 25]]} />
        <CommandList w={67} space={5} rows={[["wrap", "ﾗｯﾌﾟ", 30], ["intersect", "交差", 29], ["mirror", "ﾐﾗｰ", 25]]} />
        <GroupRule />
        <Command w={50} gap={3} icon="reference" lines={[["参照...", 44]]} />
        <Command w={36} gap={5} icon="curve" lines={[["ｶｰﾌﾞ", 31]]} />
        <Cell $w={4} $top={0} />
        <GroupRule />
        <Instant>
          <Icon name="instant" />
          <Label w={66} size={15} font={UI} lh={18} dy={-1}>Instant3D</Label>
        </Instant>
      </Ribbon>

      <Main>
        <Work>
          <TabRow>
            {ribbonTabs.map(([text, w, tw], i) => (
              <Tab key={text} $w={w} $on={i === 0}>
                <Label w={tw} size={/^[A-Z]/.test(text) ? 16 : 15} font={/^[A-Z]/.test(text) ? UI : KANA}>{text}</Label>
              </Tab>
            ))}
          </TabRow>
          <Columns>
            <Side>
              <SideTop><Knob /></SideTop>
              <SideTabs>
                <SideTab $w={42} $on><Icon name="part" /></SideTab>
                <SideTab $w={40}><Icon name="listDoc" /></SideTab>
                <SideTab $w={40}><Icon name="config" /></SideTab>
                <SideTab $w={40}><Icon name="target" /></SideTab>
                <SideTab $w={40}><Icon name="ball" /></SideTab>
                <SideTabCut $w={18}>
                  <svg width="7" height="18" viewBox="0 0 7 18">
                    <path d="M0 0h7v18H0z" fill="#9ea4a8" />
                    <path d="M0 1l7 7v8L0 8z" fill={B} />
                    <path d="M0 1l7 0v7z" fill="#d5dde2" stroke="#444" strokeWidth=".8" />
                  </svg>
                </SideTabCut>
                <SideTab $w={26} $light><Arrow $left /></SideTab>
                <SideTab $w={24} $light><Arrow /></SideTab>
              </SideTabs>
              <FilterBox><Icon name="filter" /></FilterBox>
              <Tree>
                <TreeRow>
                  <ToolCell $gap={3} $w={20}><Icon name="part" size={19} /></ToolCell>
                  <ToolCell $gap={3} $w={20}><Icon name="cap" /></ToolCell>
                  <TreeText><Label w={218} font={UI}>Leptrino_ForceSens_R041213 v1  (</Label></TreeText>
                </TreeRow>
                {tree.map(([icon, text, w, twist], i) => (
                  <TreeRow key={i}>
                    <Twist>{twist && <Arrow $color="#555" />}</Twist>
                    <Icon name={icon} />
                    <TreeText><Label w={w} font={/^[A-Z]/.test(text) ? UI : KANA}>{text}</Label></TreeText>
                  </TreeRow>
                ))}
                <TreeEnd />
              </Tree>
              <HScroll>
                <svg width="19" height="20" viewBox="0 0 19 20"><path d="M12 5L7 10l5 5" fill="none" stroke="#444" strokeWidth="2" /></svg>
                <HThumb />
                <svg width="14" height="20" viewBox="0 0 14 20"><path d="M2 5l5 5-5 5" fill="none" stroke="#444" strokeWidth="2" /></svg>
              </HScroll>
              <SideFoot />
            </Side>

            <View>
              <Model width="1300" height="804" viewBox="0 0 1300 804">
                <polygon points={plate} fill="#404040" stroke="#000" strokeWidth="1.400" />
                <circle cx="809" cy="112.500" r="26" fill="#fcfcfe" stroke="#000" strokeWidth="1.400" />
                <circle cx="809" cy="662" r="26" fill="#fff" stroke="#000" strokeWidth="1.400" />
                {pockets.map(([x, y]) => (
                  <circle key={`${x}-${y}`} cx={x} cy={y} r="26" fill="none" stroke="#000" strokeWidth="1.400" />
                ))}
                <rect x="47.500" y="706" width="5" height="24" fill="#7fbf7f" stroke="#174f17" strokeWidth="1.500" />
                <path d="M50 698l6 11H44z" fill="#1d701d" />
                <rect x="54" y="733" width="24" height="5" fill="#e98b8b" stroke="#6a1414" strokeWidth="1.500" />
                <path d="M87 735.500l-11 6v-12z" fill="#cf1717" />
                <circle cx="50" cy="735.500" r="6" fill="#14147a" />
                <path d="M48 732.500h4l-4 6h4" fill="none" stroke="#2222ff" />
                <text x="50" y="695" fontSize="13" fill="#149014" textAnchor="middle" fontFamily="Liberation Sans" textLength="6" lengthAdjust="spacingAndGlyphs">Y</text>
                <text x="90.500" y="739.500" fontSize="14" fill="#ee1c1c" textAnchor="middle" fontFamily="Liberation Sans" textLength="6" lengthAdjust="spacingAndGlyphs">X</text>
              </Model>
              <HeadsUp><Tools start={273} items={headsUpTools} muted /></HeadsUp>
              <Flyout><Knob /></Flyout>
              <ViewName><Label w={45} size={16} weight={500}>*正面</Label></ViewName>
              <TaskTabs>
                {taskIcons.map((name, i) => (
                  <TaskTab key={name} $on={i === 0}><Icon name={name} /></TaskTab>
                ))}
              </TaskTabs>

              <Dialog>
                <DialogHead>
                  <Label w={91} size={15} font={UI}>SOLIDWORKS</Label>
                  <svg width="13" height="13" viewBox="0 0 13 13"><path d="M.5.5l12 12M12.500.5l-12 12" stroke="#111" strokeWidth="1.200" /></svg>
                </DialogHead>
                <DialogBody>
                  <svg width="40" height="41" viewBox="0 0 40 41">
                    <path d="M20 1.500L39 39.500H1z" fill="#fde000" stroke="#fdb813" strokeWidth="1.400" />
                    <path d="M20 15v15M20 32v3" stroke="#111" strokeWidth="2.200" />
                  </svg>
                  <Label w={221} dy={7}>この部品でｲﾝﾎﾟｰﾄ診断を行いますか?</Label>
                </DialogBody>
                <DialogFoot>
                  <Check $size={16} $border="#333" $fill="#fff" $top={17} $gap={14} />
                  <Label w={206} dy={18}>以後、このﾒｯｾｰｼﾞを表示しない(D)</Label>
                  <DialogButton $primary $gap={31}><Label w={42}>はい(Y)</Label></DialogButton>
                  <DialogButton $gap={10}><Label w={56}>いいえ(N)</Label></DialogButton>
                </DialogFoot>
              </Dialog>
            </View>
          </Columns>
        </Work>

        <Pane>
          <PaneHead>
            <Icon name="collapse" />
            <PaneTitle><Label w={191} size={15} font={UI} color="#000" weight={500}>3DEXPERIENCE Marketplace</Label></PaneTitle>
            <PaneTools>
              <Icon name="gearLight" size={18} />
              <Icon name="pin" size={18} />
            </PaneTools>
          </PaneHead>
          <PaneBody>
            <Card>
              <Heading>
                <Label w={47} size={23} lh={32} color="#333">更新</Label>
                <Label w={23} size={23} lh={32} weight={700} color="#333">を</Label>
                <Label w={95} size={23} lh={32} color="#333">利用可能</Label>
              </Heading>
              <Label w={210} size={20} lh={30} color="#777" font={ARIAL} weight={300}>SOLIDWORKS ｱﾄﾞｲﾝ用</Label>
              <Label w={269} size={20} lh={30} color="#777" font={ARIAL} weight={300}>3DEXPERIENCE Marketplace</Label>
              <Label w={279} size={20} lh={30} color="#777" font={ARIAL} weight={300}>の新しい更新のﾀﾞｳﾝﾛｰﾄﾞが利用</Label>
              <Label w={249} size={20} lh={30} color="#777" font={ARIAL} weight={300}>可能になりました: 6.31.534</Label>
              <Action $primary><Label w={99} size={20} lh={30} color="#fff">更新を取得</Label></Action>
              <Action><Label w={38} size={20} lh={30} color="#555" font={THIN} weight={300}>後で</Label></Action>
              <AskRow>
                <Check $size={25} $border="#b4b4b4" $fill="#eee" $top={8} $gap={20} />
                <span>
                  <Label w={219} size={20} lh={30} color="#777" font={THIN} weight={300}>以後、この更新中に尋ね</Label>
                  <Label w={40} size={20} lh={30} color="#777" font={THIN} weight={300}>ない</Label>
                </span>
              </AskRow>
            </Card>
          </PaneBody>
        </Pane>
      </Main>

      <Bottom>
        <NavButton $w={20}><NavBar /><Arrow $left $color="#7c7d9c" $size={5} /></NavButton>
        <NavButton $w={20}><Arrow $left $color="#7c7d9c" $size={5} /></NavButton>
        <NavButton $w={20}><Arrow $color="#7c7d9c" $size={5} /></NavButton>
        <NavButton $w={20}><Arrow $color="#7c7d9c" $size={5} /><NavBar /></NavButton>
        <BottomTab $w={63} $pad={15} $on><Label w={36} size={14} dy={-1} lh={16}>ﾓﾃﾞﾙ</Label></BottomTab>
        <BottomTab $w={74} $pad={8}><Label w={55} size={14} dy={-2} lh={16}>3D ﾋﾞｭｰ</Label></BottomTab>
        <BottomTab $w={130} $pad={8}><Label w={103} size={14} dy={-2} lh={16}>ﾓｰｼｮﾝ ｽﾀﾃﾞｨ 1</Label></BottomTab>
        <BottomRest />
      </Bottom>
    </Window>
  );
}
